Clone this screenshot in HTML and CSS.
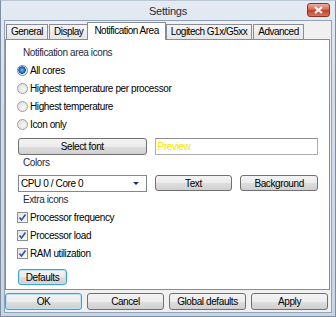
FILE: index.html
```html
<!DOCTYPE html>
<html lang="en">
<head>
    <meta charset="UTF-8">
    <title>Settings</title>
    <link rel="stylesheet" href="styles.css">
</head>
<body>
    <div class="window">
        <div class="titlebar">
            <span class="title">Settings</span>
            <span class="close">
                <svg width="11" height="8" viewBox="0 0 11 8"><path d="M2 1 L9 7 M9 1 L2 7" stroke="#fff" stroke-width="2.2"/></svg>
            </span>
        </div>
        <div class="client">
            <div class="tabs">
                <div class="tab">General</div>
                <div class="tab">Display</div>
                <div class="tab active">Notification Area</div>
                <div class="tab">Logitech G1x/G5xx</div>
                <div class="tab">Advanced</div>
            </div>
            <div class="panel">
                <div class="group">Notification area icons</div>
                <label class="option"><span class="radio checked"></span>All cores</label>
                <label class="option"><span class="radio"></span>Highest temperature per processor</label>
                <label class="option"><span class="radio"></span>Highest temperature</label>
                <label class="option"><span class="radio"></span>Icon only</label>
                <div class="row first">
                    <button class="btn wide">Select font</button>
                    <div class="preview">Preview</div>
                </div>
                <div class="group">Colors</div>
                <div class="row second">
                    <div class="combo">CPU 0 / Core 0<span class="arrow"></span></div>
                    <button class="btn half">Text</button>
                    <button class="btn half">Background</button>
                </div>
                <div class="group">Extra icons</div>
                <label class="option"><span class="check"><svg width="9" height="9" viewBox="0 0 9 9"><path d="M1.5 4.5 L3.5 7 L7.5 1.5" fill="none" stroke="#2b54b0" stroke-width="1.6"/></svg></span>Processor frequency</label>
                <label class="option"><span class="check"><svg width="9" height="9" viewBox="0 0 9 9"><path d="M1.5 4.5 L3.5 7 L7.5 1.5" fill="none" stroke="#2b54b0" stroke-width="1.6"/></svg></span>Processor load</label>
                <label class="option"><span class="check"><svg width="9" height="9" viewBox="0 0 9 9"><path d="M1.5 4.5 L3.5 7 L7.5 1.5" fill="none" stroke="#2b54b0" stroke-width="1.6"/></svg></span>RAM utilization</label>
                <div class="row bottom">
                    <button class="btn focus small">Defaults</button>
                </div>
            </div>
            <div class="footer">
                <button class="btn focus">OK</button>
                <button class="btn">Cancel</button>
                <button class="btn">Global defaults</button>
                <button class="btn">Apply</button>
            </div>
        </div>
    </div>
</body>
</html>
```

FILE: styles.css
```css
body {
    margin: 0;
    font-family: "Liberation Sans", Arial, sans-serif;
    font-size: 10px;
    letter-spacing: -0.4px;
    color: #000;
}
.window {
    width: 336px;
    height: 317px;
    box-sizing: border-box;
    border: 1px solid #7d8ea3;
    border-top-color: #b9c6d4;
    background: linear-gradient(#e4ebf3, #d3deea 30%, #c8d5e3);
    display: flex;
    flex-direction: column;
    padding: 0 3px 3px 3px;
}
.titlebar {
    height: 19px;
    display: flex;
    align-items: center;
    justify-content: center;
    position: relative;
    flex-shrink: 0;
}
.title {
    font-size: 11px;
    letter-spacing: -0.2px;
    color: #1e2b3c;
}
.close {
    position: absolute;
    right: 2px;
    top: 2px;
    width: 23px;
    height: 14px;
    box-sizing: border-box;
    border: 1px solid #8a3428;
    border-radius: 3px;
    background: linear-gradient(#eab0a4, #d86a55 45%, #c5402b 55%, #d8765e);
    display: flex;
    align-items: center;
    justify-content: center;
}
.client {
    flex: 1;
    background: #f0f0f0;
    border: 1px solid #8fa2b8;
    display: flex;
    flex-direction: column;
    padding-top: 1px;
}
.tabs {
    display: flex;
    height: 17px;
    align-items: flex-end;
    padding-left: 1px;
    flex-shrink: 0;
}
.tab {
    height: 15px;
    box-sizing: border-box;
    padding: 0 4px;
    line-height: 14px;
    border: 1px solid #898c95;
    border-bottom: none;
    background: linear-gradient(#f4f4f4, #e6e6e6);
    letter-spacing: -0.5px;
}
.tab + .tab {
    margin-left: 1px;
}
.tab.active {
    height: 18px;
    line-height: 15px;
    background: #fff;
    padding: 0 6px;
    margin: 0 -1px -1px -1px;
    position: relative;
    z-index: 1;
}
.panel {
    background: #fff;
    border: 1px solid #898c95;
    height: 251px;
    box-sizing: border-box;
    margin-right: 1px;
    padding: 5px 11px 0 11px;
    display: flex;
    flex-direction: column;
    flex-shrink: 0;
}
.group {
    padding-left: 6px;
    height: 16px;
    line-height: 16px;
    color: #1e2b3c;
}
.option {
    display: flex;
    align-items: center;
    height: 18px;
    gap: 2px;
}
.radio {
    width: 11px;
    height: 11px;
    border-radius: 50%;
    border: 1px solid #a0a0a0;
    box-sizing: border-box;
    background: radial-gradient(circle at 60% 60%, #f8f8f8, #d8d8d8);
}
.radio.checked {
    border-color: #6a8fb8;
    background: radial-gradient(circle at 45% 45%, #7cc4f4 0, #2a7fd0 2px, #1a56a0 3.5px, #e6eef6 4px);
}
.check {
    width: 11px;
    height: 11px;
    box-sizing: border-box;
    border: 1px solid #8e8f8f;
    background: linear-gradient(135deg, #e4e4e4, #fafafa);
    display: flex;
    align-items: center;
    justify-content: center;
}
.row {
    display: flex;
    gap: 8px;
    align-items: center;
    margin-left: 1px;
}
.row.first {
    margin-top: 5px;
}
.row.second {
    margin-top: 4px;
}
.row.bottom {
    margin-top: 7px;
}
.btn {
    font: inherit;
    letter-spacing: inherit;
    height: 17px;
    padding: 0;
    border: 1px solid #707070;
    border-radius: 3px;
    background: linear-gradient(#f3f3f3, #ececec 50%, #dedede 51%, #d0d0d0);
    color: #000;
}
.btn.focus {
    border-color: #3c9fd6;
    box-shadow: inset 0 0 0 1px #b8e6f8;
}
.wide {
    width: 129px;
}
.half {
    width: 78px;
    height: 16px;
    align-self: flex-start;
}
.small {
    width: 49px;
    height: 16px;
}
.preview {
    width: 164px;
    height: 17px;
    box-sizing: border-box;
    border: 1px solid #abadb3;
    border-top-color: #8c8f94;
    color: #f2e400;
    padding-left: 2px;
    line-height: 15px;
}
.combo {
    width: 129px;
    height: 17px;
    box-sizing: border-box;
    border: 1px solid #828790;
    background: #fff;
    padding-left: 2px;
    line-height: 15px;
    position: relative;
}
.arrow {
    position: absolute;
    right: 7px;
    top: 6px;
    border-left: 3px solid transparent;
    border-right: 3px solid transparent;
    border-top: 3px solid #1c2a6e;
}
.footer {
    display: flex;
    gap: 5px;
    padding: 3px 0 0 0;
}
.footer .btn {
    width: 77px;
}
```
